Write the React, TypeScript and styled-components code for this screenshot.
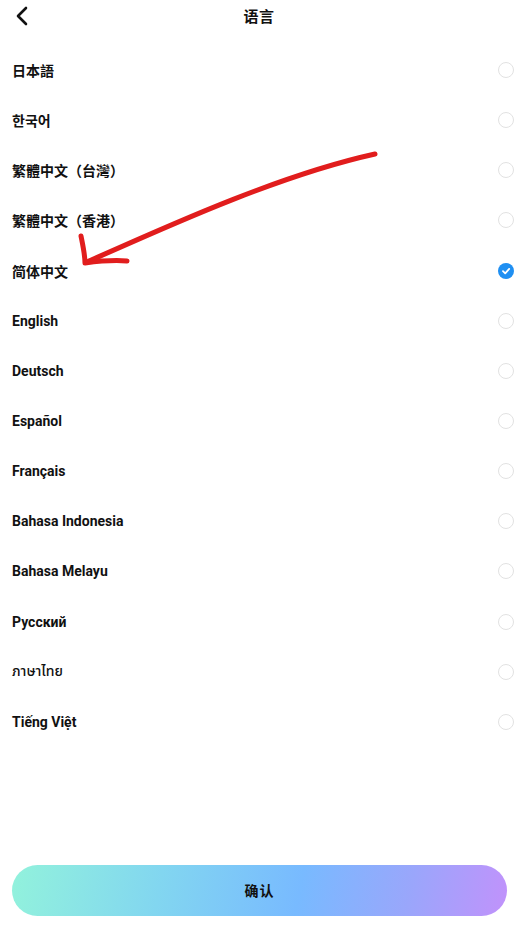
import styled, { createGlobalStyle } from "styled-components";

const GlobalStyle = createGlobalStyle`
  html, body {
    margin: 0;
    padding: 0;
    background: #ffffff;
  }
  body {
    font-family: Roboto, "Noto Sans CJK SC", "Noto Sans Thai", "Noto Sans", sans-serif;
    color: #111111;
  }
`;

const Page = styled.div`
  position: relative;
  width: 530px;
  height: 929px;
  display: flex;
  flex-direction: column;
  overflow: hidden;
`;

const Header = styled.div`
  height: 30px;
  display: flex;
  align-items: center;
  justify-content: center;
  position: relative;
  padding-right: 12px;
`;

const BackButton = styled.button`
  position: absolute;
  left: 10px;
  top: 4px;
  width: 24px;
  height: 24px;
  padding: 0;
  border: none;
  background: transparent;
  display: flex;
  align-items: center;
  justify-content: center;
`;

const Title = styled.div`
  font-size: 15px;
  font-weight: 700;
  letter-spacing: 0.5px;
  color: #111;
`;

const List = styled.ul`
  list-style: none;
  margin: 15px 0 0;
  padding: 0;
`;

const Row = styled.li`
  height: 50.15px;
  display: flex;
  align-items: center;
  justify-content: space-between;
  padding: 0 16px 0 12px;
`;

const Label = styled.span<{ $thin?: boolean }>`
  font-size: 14px;
  font-weight: ${(p) => (p.$thin ? 500 : 700)};
  color: #111;
`;

const Radio = styled.span<{ $checked?: boolean }>`
  width: 16px;
  height: 16px;
  box-sizing: border-box;
  border-radius: 50%;
  border: ${(p) => (p.$checked ? "none" : "1.5px solid #e2e2e2")};
  background: ${(p) => (p.$checked ? "#1f8ff2" : "#fff")};
  display: flex;
  align-items: center;
  justify-content: center;
`;

const Spacer = styled.div`
  flex: 1;
`;

const Confirm = styled.button`
  margin: 0 23px 13px 12px;
  height: 51px;
  border: none;
  border-radius: 26px;
  background: linear-gradient(100deg, #92f2dc 0%, #82d6f0 30%, #78baff 58%, #9aa6fb 80%, #c192fb 100%);
  font-family: inherit;
  font-size: 14px;
  font-weight: 700;
  color: #111;
  letter-spacing: 1px;
  padding-bottom: 2px;
`;

const Annotation = styled.svg`
  position: absolute;
  left: 0;
  top: 0;
  pointer-events: none;
`;

const languages = [
  "日本語",
  "한국어",
  "繁體中文（台灣）",
  "繁體中文（香港）",
  "简体中文",
  "English",
  "Deutsch",
  "Español",
  "Français",
  "Bahasa Indonesia",
  "Bahasa Melayu",
  "Русский",
  "ภาษาไทย",
  "Tiếng Việt",
];

const selected = "简体中文";

export default function App() {
  return (
    <>
      <GlobalStyle />
      <Page>
        <Header>
          <BackButton aria-label="back">
            <svg width="14" height="20" viewBox="0 0 14 20">
              <path d="M11 2 L3 10 L11 18" fill="none" stroke="#111" strokeWidth="2.6" strokeLinecap="round" strokeLinejoin="round" />
            </svg>
          </BackButton>
          <Title>语言</Title>
        </Header>
        <List>
          {languages.map((lang) => (
            <Row key={lang}>
              <Label $thin={lang === "ภาษาไทย"}>{lang}</Label>
              <Radio $checked={lang === selected}>
                {lang === selected && (
                  <svg width="10" height="10" viewBox="0 0 10 10">
                    <path d="M2 5.2 L4.2 7.3 L8.2 2.9" fill="none" stroke="#fff" strokeWidth="1.8" strokeLinecap="round" strokeLinejoin="round" />
                  </svg>
                )}
              </Radio>
            </Row>
          ))}
        </List>
        <Spacer />
        <Confirm>确认</Confirm>
        <Annotation width="530" height="300" viewBox="0 0 530 300">
          <path
            d="M375 154 C 280 175, 170 225, 87 262"
            fill="none"
            stroke="#e11d1d"
            strokeWidth="5"
            strokeLinecap="round"
          />
          <path
            d="M81 236 C 83 246, 85 255, 85 263 C 100 261, 115 260, 127 261"
            fill="none"
            stroke="#e11d1d"
            strokeWidth="5"
            strokeLinecap="round"
            strokeLinejoin="round"
          />
        </Annotation>
      </Page>
    </>
  );
}
